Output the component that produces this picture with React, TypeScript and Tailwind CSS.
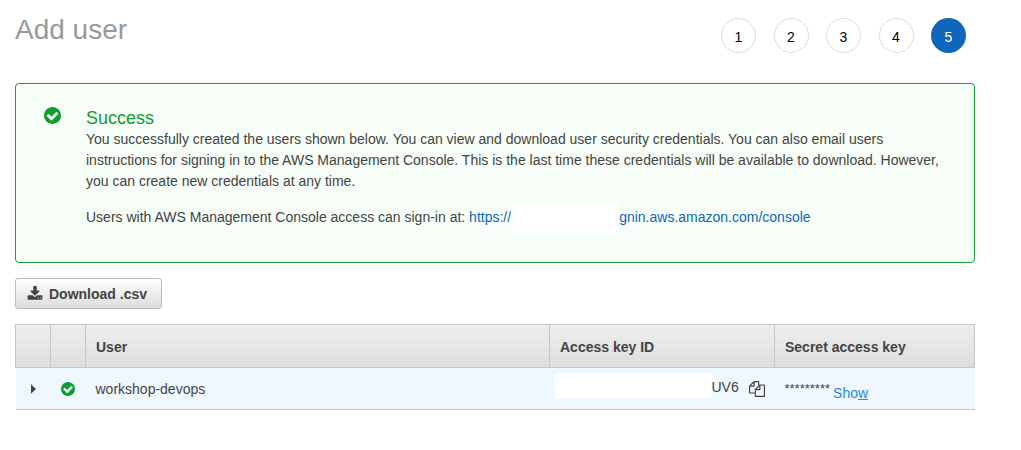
import React from "react";

function CheckCircle({ className }: { className: string }) {
  return (
    <svg viewBox="128 128 1536 1536" className={className} fill="currentColor" aria-hidden="true">
      <path d="M1412 734q0-28-18-46l-91-90q-19-19-45-19t-45 19l-408 407-226-226q-19-19-45-19t-45 19l-91 90q-18 18-18 46 0 27 18 45l362 362q19 19 45 19 27 0 46-19l543-543q18-18 18-45zm252 162q0 209-103 385.5t-279.5 279.5-385.5 103-385.5-103-279.5-279.5-103-385.5 103-385.5 279.5-279.5 385.5-103 385.5 103 279.5 279.5 103 385.5z" />
    </svg>
  );
}

function DownloadIcon() {
  return (
    <svg viewBox="0 0 1792 1792" className="size-4" fill="currentColor" aria-hidden="true">
      <path d="M1344 1344q0-26-19-45t-45-19-45 19-19 45 19 45 45 19 45-19 19-45zm256 0q0-26-19-45t-45-19-45 19-19 45 19 45 45 19 45-19 19-45zm128-224v320q0 40-28 68t-68 28h-1472q-40 0-68-28t-28-68v-320q0-40 28-68t68-28h465l135 136q58 56 136 56t136-56l136-136h464q40 0 68 28t28 68zm-325-569q17 41-14 70l-448 448q-18 19-45 19t-45-19l-448-448q-31-29-14-70 17-39 59-39h256v-448q0-26 19-45t45-19h256q26 0 45 19t19 45v448h256q42 0 59 39z" />
    </svg>
  );
}

function CopyIcon() {
  return (
    <svg viewBox="0 0 1792 1792" className="size-4" fill="currentColor" aria-hidden="true">
      <path d="M1696 384q40 0 68 28t28 68v1216q0 40-28 68t-68 28h-960q-40 0-68-28t-28-68v-288h-544q-40 0-68-28t-28-68v-672q0-40 20-88t48-76l408-408q28-28 76-48t88-20h416q40 0 68 28t28 68v328q68-40 128-40h416zm-544 213l-299 299h299v-299zm-640-384l-299 299h299v-299zm196 647l316-316v-416h-384v416q0 40-28 68t-68 28h-416v640h512v-256q0-40 20-88t48-76zm956 804v-1152h-384v416q0 40-28 68t-68 28h-416v640h896z" />
    </svg>
  );
}

const steps = [1, 2, 3, 4, 5];
const currentStep = 5;

export default function App() {
  return (
    <main className="bg-white pt-3 pr-[46px] pb-10 pl-[15px] font-['Liberation_Sans',Arial,sans-serif] text-sm text-[#444]">
      <header className="flex items-start justify-between pr-[9px]">
        <h1 className="text-[28px] leading-9 text-[#999]">Add user</h1>
        <ol className="flex w-[245px] justify-between pt-[6px]">
          {steps.map((step) => (
            <li
              key={step}
              aria-current={step === currentStep ? "step" : undefined}
              className={
                step === currentStep
                  ? "flex size-[35px] items-center justify-center rounded-full bg-[#1166bb] pt-[2px] text-white"
                  : "flex size-[35px] items-center justify-center rounded-full border border-[#ddd] pt-[2px] text-black"
              }
            >
              {step}
            </li>
          ))}
        </ol>
      </header>

      <section className="mt-[30px] flex rounded border border-[#1a9c3b] bg-[#f6fef7] pt-[23px] pr-5 pb-[31px] pl-7">
        <CheckCircle className="size-[17px] shrink-0 text-[#109c30]" />
        <div className="ml-[25px] leading-[21px]">
          <h2 className="text-lg leading-[22px] text-[#109c30]">Success</h2>
          <p>
            You successfully created the users shown below. You can view and download user security credentials. You can
            also email users instructions for signing in to the AWS Management Console. This is the last time these
            credentials will be available to download. However, you can create new credentials at any time.
          </p>
          <p className="mt-3 flex items-center">
            <span>Users with AWS Management Console access can sign-in at:&nbsp;</span>
            <a href="#console" className="flex items-center text-[#1166bb]">
              https://
              <span className="h-[27px] w-[108px] bg-white" />
              gnin.aws.amazon.com/console
            </a>
          </p>
        </div>
      </section>

      <button
        type="button"
        className="mt-[15px] flex h-[31px] items-center gap-[6px] rounded-[3px] border border-[#bbb] bg-linear-to-b from-white to-[#ddd] pr-[14px] pl-[11px] font-bold"
      >
        <DownloadIcon />
        Download .csv
      </button>

      <table className="mt-[15px] w-full table-fixed border-collapse text-left">
        <colgroup>
          <col className="w-[35px]" />
          <col className="w-[35px]" />
          <col />
          <col className="w-[225px]" />
          <col className="w-[200px]" />
        </colgroup>
        <thead>
          <tr className="h-[43px] bg-linear-to-b from-[#eee] to-[#ddd]">
            <th className="border border-[#c6c6c6]" aria-label="Expand" />
            <th className="border border-[#c6c6c6]" aria-label="Status" />
            <th className="border border-[#c6c6c6] px-[10px] pt-[2px]">User</th>
            <th className="border border-[#c6c6c6] px-[10px] pt-[2px]">Access key ID</th>
            <th className="border border-[#c6c6c6] px-[10px] pt-[2px]">Secret access key</th>
          </tr>
        </thead>
        <tbody>
          <tr className="h-[42px] border-b border-[#c6c6c6] bg-[#f0f8ff]">
            <td>
              <button type="button" aria-label="Expand row" className="mx-auto flex">
                <svg viewBox="0 0 5 10" className="h-[10px] w-[5px]" fill="currentColor" aria-hidden="true">
                  <path d="M0 0.3 5 5 0 9.7z" />
                </svg>
              </button>
            </td>
            <td>
              <CheckCircle className="mx-auto size-[14px] text-[#109c30]" />
            </td>
            <td className="px-[10px]">workshop-devops</td>
            <td className="pr-2 pl-[5px]">
              <div className="flex items-center">
                <span className="mb-[6px] h-6 w-[157px] bg-white" />
                <span className="mb-1">UV6</span>
                <button type="button" aria-label="Copy access key ID" className="ml-[10px]">
                  <CopyIcon />
                </button>
              </div>
            </td>
            <td className="px-[10px]">
              <div className="flex items-center">
                <span className="pt-[2px] text-[13px]">*********</span>
                <a href="#show" className="mt-2 ml-[3px] text-[#2b87e3]">
                  Sho<span className="underline">w</span>
                </a>
              </div>
            </td>
          </tr>
        </tbody>
      </table>
    </main>
  );
}
